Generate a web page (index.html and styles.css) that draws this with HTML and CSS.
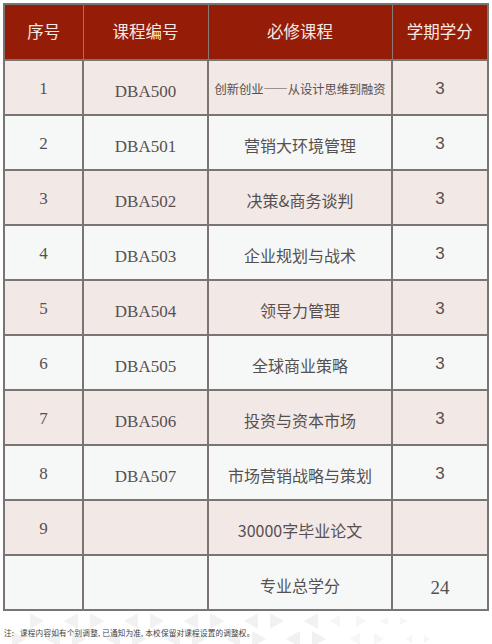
FILE: index.html
```html
<!DOCTYPE html>
<html lang="zh">
<head>
<meta charset="utf-8">
<link rel="stylesheet" href="styles.css">
</head>
<body>
<div class="page">
  <table class="plan">
    <colgroup>
      <col class="c1"><col class="c2"><col class="c3"><col class="c4">
    </colgroup>
    <thead>
      <tr><th>序号</th><th>课程编号</th><th>必修课程</th><th>学期学分</th></tr>
    </thead>
    <tbody>
      <tr class="pink"><td class="no">1</td><td class="code">DBA500</td><td class="course small">创新创业——从设计思维到融资</td><td class="cr">3</td></tr>
      <tr class="light"><td class="no">2</td><td class="code">DBA501</td><td class="course">营销大环境管理</td><td class="cr">3</td></tr>
      <tr class="pink"><td class="no">3</td><td class="code">DBA502</td><td class="course">决策&amp;商务谈判</td><td class="cr">3</td></tr>
      <tr class="light"><td class="no">4</td><td class="code">DBA503</td><td class="course">企业规划与战术</td><td class="cr">3</td></tr>
      <tr class="pink"><td class="no">5</td><td class="code">DBA504</td><td class="course">领导力管理</td><td class="cr">3</td></tr>
      <tr class="light"><td class="no">6</td><td class="code">DBA505</td><td class="course">全球商业策略</td><td class="cr">3</td></tr>
      <tr class="pink"><td class="no">7</td><td class="code">DBA506</td><td class="course">投资与资本市场</td><td class="cr">3</td></tr>
      <tr class="light"><td class="no">8</td><td class="code">DBA507</td><td class="course">市场营销战略与策划</td><td class="cr">3</td></tr>
      <tr class="pink"><td class="no">9</td><td class="code"></td><td class="course">30000字毕业论文</td><td class="cr"></td></tr>
      <tr class="light"><td class="no"></td><td class="code"></td><td class="course">专业总学分</td><td class="total">24</td></tr>
    </tbody>
  </table>
  <div class="foot">
    <svg class="pattern" width="492" height="40" viewBox="0 0 492 40">
      <g fill="#f1f1f1">
        <polygon points="30,2 44,10 30,18"/><polygon points="78,2 64,10 78,18"/>
        <polygon points="90,2 104,10 90,18"/><polygon points="138,2 124,10 138,18"/>
        <polygon points="150,2 164,10 150,18"/><polygon points="198,2 184,10 198,18"/>
        <polygon points="210,2 224,10 210,18"/><polygon points="258,2 244,10 258,18"/>
        <polygon points="270,2 284,10 270,18"/><polygon points="318,2 304,10 318,18"/>
        <polygon points="60,20 46,28 60,36"/>
        <polygon points="120,20 106,28 120,36"/><polygon points="180,20 166,28 180,36"/>
        <polygon points="240,20 226,28 240,36"/><polygon points="300,20 286,28 300,36"/>
        <polygon points="12,20 26,28 12,36"/><polygon points="72,20 86,28 72,36"/>
        <polygon points="132,20 146,28 132,36"/><polygon points="192,20 206,28 192,36"/>
        <polygon points="252,20 266,28 252,36"/><polygon points="312,20 326,28 312,36"/>
      </g>
      <g fill="#f6f6f6">
        <polygon points="340,4 330,10 340,16"/><polygon points="356,4 366,10 356,16"/>
        <polygon points="388,6 380,10 388,14"/><polygon points="400,6 408,10 400,14"/>
        <polygon points="360,22 350,28 360,34"/><polygon points="374,22 384,28 374,34"/>
        <polygon points="412,24 406,28 412,32"/><polygon points="424,24 430,28 424,32"/>
      </g>
    </svg>
    <p class="note"><span class="lbl">注:</span>课程内容如有个别调整, 已通知为准, 本校保留对课程设置的调整权。</p>
  </div>
</div>
</body>
</html>
```
FILE: styles.css
```css
html, body {
  margin: 0;
  padding: 0;
  background: #ffffff;
}
.page {
  width: 492px;
  height: 644px;
  padding-top: 3px;
  box-sizing: border-box;
  overflow: hidden;
}
.plan {
  margin-left: 3px;
  width: 484px;
  table-layout: fixed;
  border-collapse: collapse;
  border: 2px solid #7a7472;
}
.c1 { width: 79px; }
.c2 { width: 125px; }
.c3 { width: 184px; }
.c4 { width: 96px; }
.plan thead tr { height: 56px; }
.plan tbody tr { height: 55px; }
.plan th {
  background: #951d07;
  color: #f6e9e4;
  font-family: "Noto Sans CJK SC", "Noto Sans", sans-serif;
  font-weight: 400;
  font-size: 16.5px;
  line-height: 20px;
  border: 1.5px solid #8a7b77;
  border-top: 2px solid #7a7472;
  padding: 0 0 2px;
  text-align: center;
  vertical-align: middle;
}
.plan td {
  border: 2px solid #7a7472;
  padding: 0;
  line-height: 20px;
  text-align: center;
  vertical-align: middle;
  color: #575050;
}
.pink td { background: #f2e9e7; }
.light td { background: #f6f8f7; }
.plan td.no {
  font-family: "Liberation Serif", "DejaVu Serif", serif;
  font-size: 17px;
  padding-top: 2px;
}
.plan td.code {
  font-family: "Liberation Serif", "DejaVu Serif", serif;
  font-size: 17px;
  padding-top: 8px;
}
.plan td.course {
  font-family: "Noto Sans CJK SC", sans-serif;
  font-size: 16px;
  padding-top: 5px;
}
.plan td.course.small {
  font-size: 12.3px;
  letter-spacing: -0.1px;
  padding-top: 2px;
  white-space: nowrap;
}
.plan td.cr {
  font-family: "Liberation Sans", Arial, sans-serif;
  font-size: 17px;
  padding-top: 2px;
}
.plan td.total {
  font-family: "Liberation Serif", serif;
  font-size: 19px;
  padding-top: 10px;
}
.foot {
  position: relative;
  height: 33px;
}
.pattern {
  position: absolute;
  left: 0;
  top: 0;
}
.note {
  position: relative;
  margin: 0;
  padding: 17px 0 0 4px;
  font-family: "Noto Sans CJK SC", sans-serif;
  font-size: 7.6px;
  letter-spacing: 0.2px;
  line-height: 10px;
  color: #3f3f3f;
  white-space: nowrap;
}
.lbl {
  display: inline-block;
  width: 16px;
}
```
